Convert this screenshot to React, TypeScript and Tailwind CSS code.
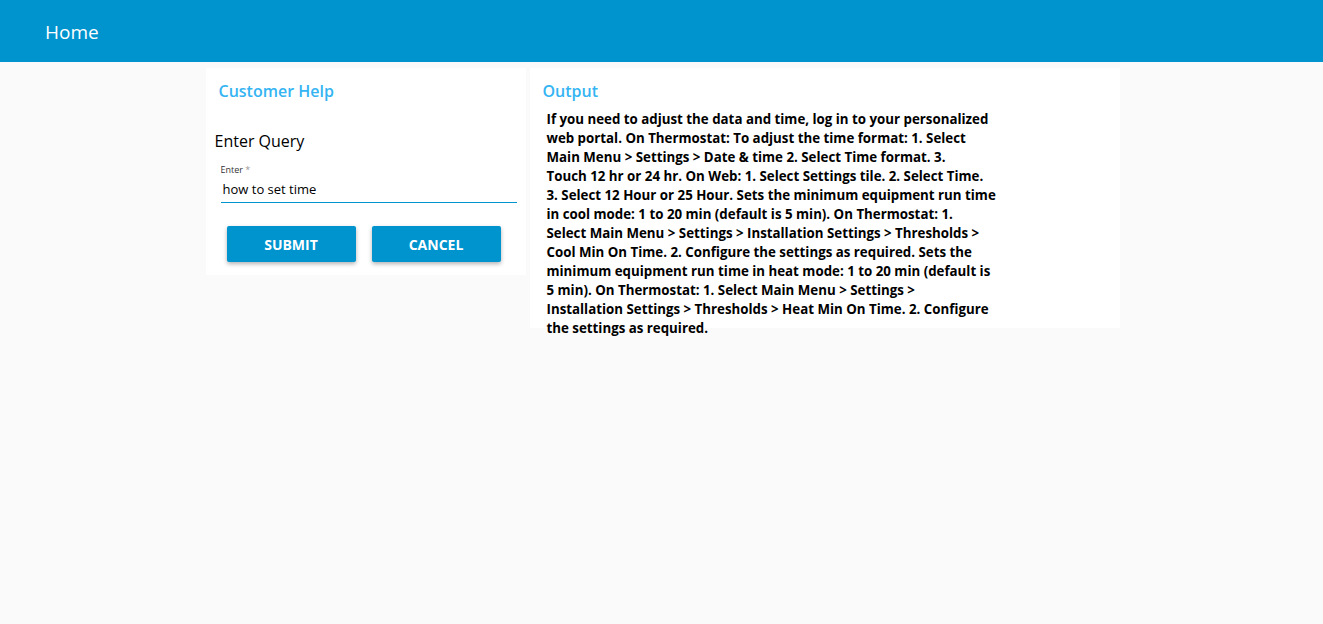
import React from "react";

const lines = [
  "If you need to adjust the data and time, log in to your personalized",
  "web portal. On Thermostat: To adjust the time format: 1. Select",
  "Main Menu > Settings > Date & time 2. Select Time format. 3.",
  "Touch 12 hr or 24 hr. On Web: 1. Select Settings tile. 2. Select Time.",
  "3. Select 12 Hour or 25 Hour. Sets the minimum equipment run time",
  "in cool mode: 1 to 20 min (default is 5 min). On Thermostat: 1.",
  "Select Main Menu > Settings > Installation Settings > Thresholds >",
  "Cool Min On Time. 2. Configure the settings as required. Sets the",
  "minimum equipment run time in heat mode: 1 to 20 min (default is",
  "5 min). On Thermostat: 1. Select Main Menu > Settings >",
  "Installation Settings > Thresholds > Heat Min On Time. 2. Configure",
  "the settings as required.",
];

export default function App() {
  return (
    <div
      className="min-h-[624px] bg-[#fafafa] text-black"
      style={{ fontFamily: '"Open Sans", "Noto Sans", sans-serif' }}
    >
      <header className="h-[62px] bg-[#0094cf] flex items-center px-[45px] pt-[2px]">
        <h1 className="text-[19px] text-white">Home</h1>
      </header>

      <main className="flex justify-center gap-[4px] pt-[6px] pl-[2px]">
        <section className="w-[320px] h-[207px] bg-white px-[13px] pt-[11px]">
          <h2 className="text-[16px] font-semibold text-[#34b4f2] leading-[24px]">
            Customer Help
          </h2>
          <h3 className="mt-[25px] -ml-[4px] text-[16px] leading-[26px]">Enter Query</h3>
          <div className="mt-[10px] ml-[2px] w-[296px] border-b border-[#0094cf]">
            <label className="block text-[9px] leading-[12px] text-[#333]">
              Enter <span className="text-[#999]">*</span>
            </label>
            <input
              defaultValue="how to set time"
              className="block w-full text-[13px] leading-[20px] pl-[2px] pt-[3px] pb-[3px] bg-transparent outline-none"
            />
          </div>
          <div className="flex gap-[16px] mt-[23px] pl-[8px]">
            <button className="w-[129px] h-[36px] rounded-[2px] bg-[#0094cf] text-white text-[14px] font-bold shadow-[0_2px_4px_rgba(0,0,0,0.3)]">
              SUBMIT
            </button>
            <button className="w-[129px] h-[36px] rounded-[2px] bg-[#0094cf] text-white text-[14px] font-bold shadow-[0_2px_4px_rgba(0,0,0,0.3)]">
              CANCEL
            </button>
          </div>
        </section>

        <section className="w-[590px] h-[260px] bg-white px-[13px] pt-[11px]">
          <h2 className="text-[16px] font-semibold text-[#34b4f2] leading-[24px]">
            Output
          </h2>
          <p className="mt-[7px] pl-[4px] text-[13.3px] font-bold leading-[19px]">
            {lines.map((l) => (
              <span key={l} className="block whitespace-nowrap">
                {l}
              </span>
            ))}
          </p>
        </section>
      </main>
    </div>
  );
}
